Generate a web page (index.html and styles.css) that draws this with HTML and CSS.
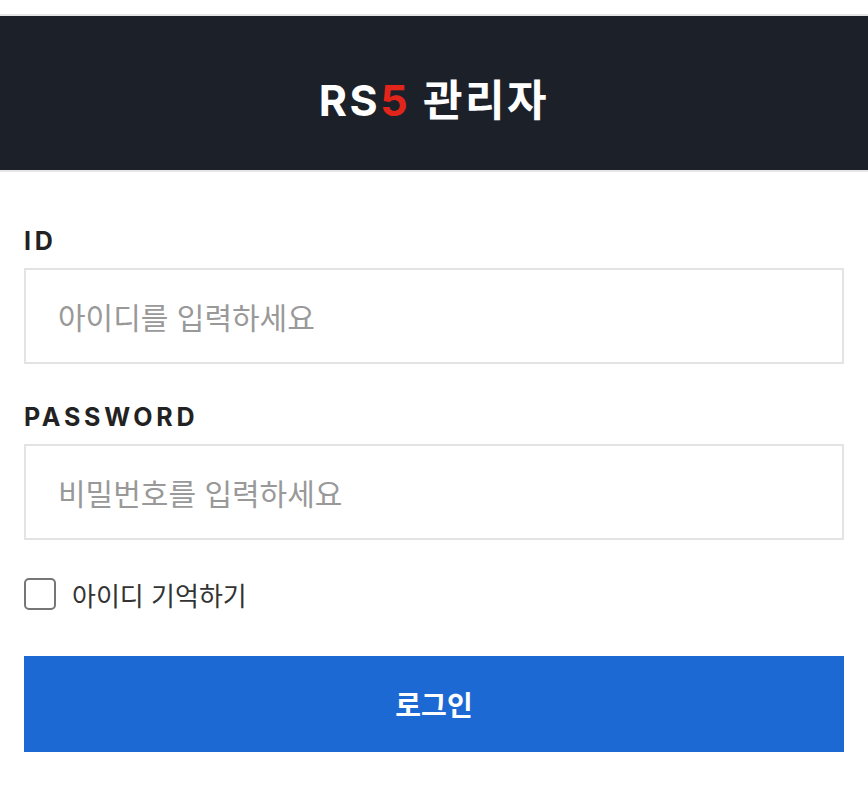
FILE: index.html
```html
<!DOCTYPE html>
<html lang="ko">
  <head>
    <title>RS5 관리자</title>
    <meta charset="utf-8" />
    <link rel="stylesheet" href="styles.css">
  </head>
  <body>
    <div class="kartya">
      <div class="fejlec">
        <h1>RS<span class="piros">5</span> 관리자</h1>
      </div>
      <form class="urlap">
        <label class="cimke" for="azon">ID</label>
        <input class="mezo" id="azon" type="text" placeholder="아이디를 입력하세요" />
        <label class="cimke" for="jelszo">PASSWORD</label>
        <input class="mezo" id="jelszo" type="password" placeholder="비밀번호를 입력하세요" />
        <label class="emlekezz">
          <input type="checkbox" />
          <span class="doboz"></span>
          <span>아이디 기억하기</span>
        </label>
        <button class="gomb" type="button">로그인</button>
      </form>
    </div>
  </body>
</html>
```

FILE: styles.css
```css
body {
  margin: 0;
  padding-top: 14px;
  background: #fff;
  font-family: Inter, "Noto Sans CJK KR", sans-serif;
}
.kartya {
  border-top: 2px solid #e6e6e6;
}
.fejlec {
  height: 156px;
  box-sizing: border-box;
  padding-top: 8px;
  background: #1c2129;
  border-bottom: 2px solid #e6e6e6;
  display: flex;
  align-items: center;
  justify-content: center;
}
.fejlec h1 {
  margin: 0;
  color: #fff;
  font-size: 43px;
  font-weight: 700;
  letter-spacing: 2.5px;
}
.piros {
  color: #e1251b;
}
.urlap {
  display: flex;
  flex-direction: column;
  padding: 54px 24px 40px;
}
.cimke {
  font-size: 25px;
  font-weight: 700;
  letter-spacing: 0.15em;
  color: #222;
  line-height: 30px;
  margin-bottom: 12px;
}
.mezo {
  height: 96px;
  box-sizing: border-box;
  border: 2px solid #e3e3e3;
  border-radius: 0;
  padding: 0 32px;
  font-family: "Noto Sans CJK KR", sans-serif;
  font-size: 30px;
  color: #222;
  margin-bottom: 38px;
  outline: none;
}
.mezo::placeholder {
  color: #999;
}
.emlekezz {
  display: flex;
  align-items: center;
  gap: 16px;
  height: 32px;
  font-family: "Noto Sans CJK KR", sans-serif;
  font-size: 26px;
  color: #333;
  margin-bottom: 46px;
}
.emlekezz input {
  display: none;
}
.doboz {
  width: 32px;
  height: 32px;
  box-sizing: border-box;
  border: 2px solid #767676;
  border-radius: 5px;
}
.gomb {
  height: 96px;
  border: 0;
  background: #1d69d3;
  color: #fff;
  font-family: "Noto Sans CJK KR", sans-serif;
  font-size: 28px;
  font-weight: 700;
}
```
